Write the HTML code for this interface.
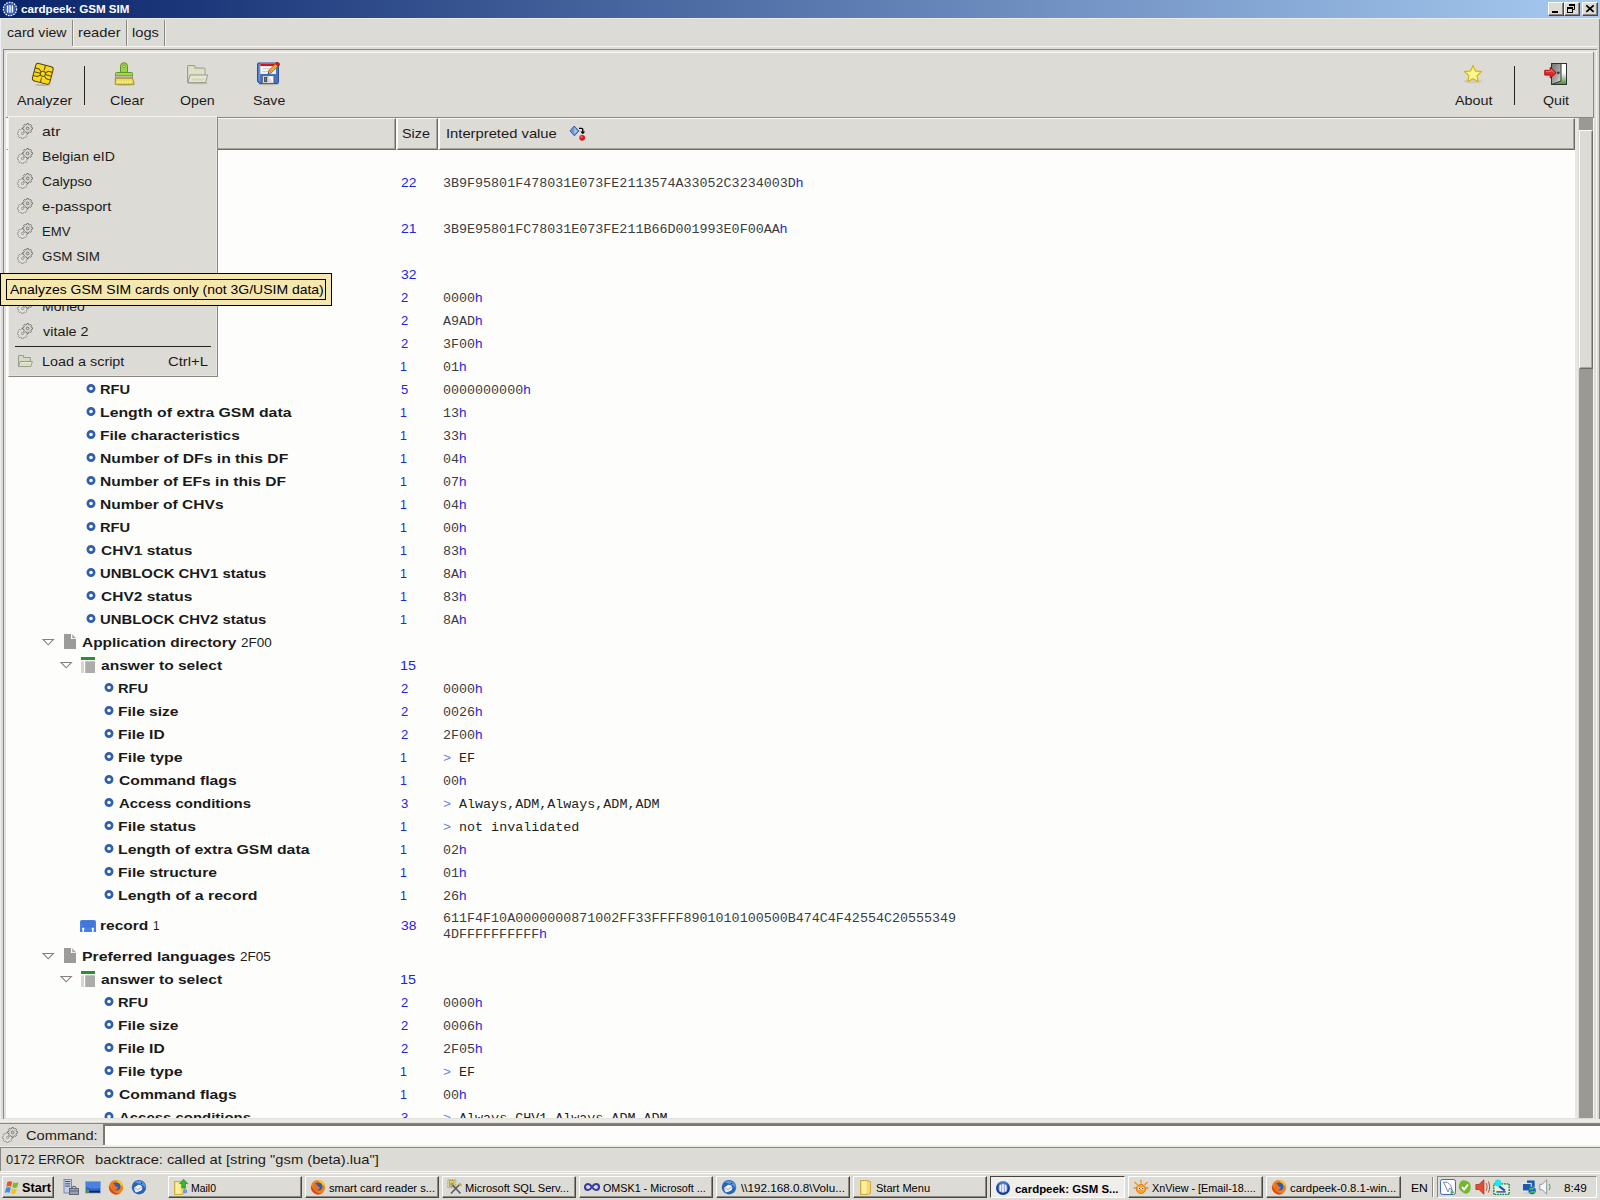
<!DOCTYPE html><html><head><meta charset="utf-8"><title>cardpeek: GSM SIM</title><style>
*{box-sizing:border-box;margin:0;padding:0}
html,body{width:1600px;height:1200px;overflow:hidden;background:#dddbd5}
body{position:relative;font-family:"Liberation Sans",sans-serif;font-size:13.5px;color:#1b1b1b}
.a{position:absolute;white-space:pre}
.a svg,.ic svg{display:block}
.ic{position:absolute}
.tx{position:absolute;white-space:pre;line-height:16px;height:16px;transform-origin:0 0}
.b{font-weight:700;font-size:13px;color:#1a1a1a}
.bl{color:#2323e4}
.gt{color:#6f7fe0}
.mono{font-family:"Liberation Mono",monospace;font-size:13.36px;color:#3c3c3c}
.mono2{font-family:"Liberation Mono",monospace;font-size:13.36px;color:#222}
.tb{font-size:11px;color:#000}
.tbb{font-size:11px;color:#000;font-weight:700}
.btn{position:absolute;border:1px solid;border-color:#fff #4a4844 #4a4844 #fff;box-shadow:inset -1px -1px 0 #8b8881;background:#dddbd5}
.hdr{position:absolute;border:1px solid;border-left-width:2px;border-color:#fbfaf8 #6e6b65 #6e6b65 #fbfaf8;box-shadow:inset -1px -1px 0 #a8a59f;background:#dddbd5}
</style></head><body>
<div class="a" style="left:0px;top:0px;width:1600px;height:18px;background:linear-gradient(90deg,#0a246a,#a6caf0)"></div>
<div class="ic" style="left:2px;top:1px"><svg width="16" height="16" viewBox="0 0 16 16"><circle cx="8" cy="8" r="7.2" fill="#2b4c9c"/><circle cx="8" cy="8" r="6.6" fill="none" stroke="#f0f4ff" stroke-width="1.3" stroke-dasharray="1.6 1.1"/><circle cx="8" cy="8" r="5.2" fill="#3a62b8"/><path d="M5.6 4.6v6.8M8 4.2v7.6M10.4 4.6v6.8" stroke="#fff" stroke-width="1.4"/></svg></div>
<div class="tx tbb" style="left:20.74px;top:0.5px;transform:scaleX(1.0565);color:#fff">cardpeek: GSM SIM</div>
<div class="btn" style="left:1548px;top:2px;width:16px;height:14px;"><svg width="14" height="12" viewBox="0 0 14 12"><rect x="3" y="8" width="6" height="2" fill="#000"/></svg></div>
<div class="btn" style="left:1564px;top:2px;width:16px;height:14px;"><svg width="14" height="12" viewBox="0 0 14 12"><path d="M4.500 3V1.500h5v5H8" fill="none" stroke="#000"/><path d="M4 2h6" stroke="#000" stroke-width="2"/><rect x="2.500" y="4.500" width="5" height="5" fill="none" stroke="#000"/><path d="M2 5h6" stroke="#000" stroke-width="2"/></svg></div>
<div class="btn" style="left:1582px;top:2px;width:16px;height:14px;"><svg width="14" height="12" viewBox="0 0 14 12"><path d="M3.300 2.300l7.400 6.600M10.700 2.300l-7.400 6.600" stroke="#000" stroke-width="1.800"/></svg></div>
<div class="a" style="left:0px;top:18px;width:1600px;height:1px;background:#ecebe7"></div>
<div class="a" style="left:72px;top:20px;width:1px;height:26px;background:#8b8881"></div>
<div class="a" style="left:73px;top:20px;width:1px;height:26px;background:#f1f0ec"></div>
<div class="a" style="left:126px;top:20px;width:1px;height:26px;background:#8b8881"></div>
<div class="a" style="left:127px;top:20px;width:1px;height:26px;background:#f1f0ec"></div>
<div class="a" style="left:164px;top:20px;width:1px;height:26px;background:#8b8881"></div>
<div class="a" style="left:165px;top:20px;width:1px;height:26px;background:#f1f0ec"></div>
<div class="a" style="left:72px;top:46px;width:1526px;height:1px;background:#f4f3f0"></div>
<div class="tx" style="left:6.98px;top:25.0px;transform:scaleX(1.0442);">card view</div>
<div class="tx" style="left:78.18px;top:25.0px;transform:scaleX(1.0921);">reader</div>
<div class="tx" style="left:131.69px;top:25.0px;transform:scaleX(1.0851);">logs</div>
<div class="a" style="left:0px;top:19px;width:1px;height:1103px;background:#efeef0"></div>
<div class="a" style="left:3px;top:49px;width:1594px;height:1px;background:#8b8881"></div>
<div class="a" style="left:3px;top:49px;width:1px;height:1073px;background:#8b8881"></div>
<div class="a" style="left:4px;top:50px;width:1592px;height:2px;background:#e5e3de"></div>
<div class="a" style="left:4px;top:50px;width:2px;height:1070px;background:#e3e1dc"></div>
<div class="a" style="left:6px;top:52px;width:1587px;height:1px;background:#f7f6f4"></div>
<div class="a" style="left:6px;top:52px;width:1px;height:65px;background:#f7f6f4"></div>
<div class="a" style="left:1593px;top:52px;width:1px;height:66px;background:#8b8881"></div>
<div class="a" style="left:1596px;top:50px;width:1px;height:1072px;background:#f7f6f4"></div>
<div class="a" style="left:1599px;top:19px;width:1px;height:1103px;background:#8b8881"></div>
<div class="a" style="left:6px;top:117px;width:1588px;height:1px;background:#8b8881"></div>
<div class="ic" style="left:31px;top:62px"><svg width="24" height="24" viewBox="0 0 24 24"><ellipse cx="12" cy="23" rx="8" ry="1" fill="#b9b6ae"/><g transform="rotate(14.5 11.8 11.8)"><rect x="2.8" y="2.8" width="18" height="18" rx="2.6" fill="#fcd915" stroke="#4f4714" stroke-width="1"/><g fill="none" stroke="#5e4e0c" stroke-width="1.05"><path d="M12.3 2.8v5.2M11.6 20.8v-5"/><circle cx="11.9" cy="11.8" r="2.6"/><path d="M2.8 8h4.2l2.4 2M2.8 11.9h6.4M2.8 15.8h4.4l2.3-2"/><path d="M20.8 8h-4.3l-2.3 2M20.8 11.9h-6.3M20.8 15.8h-4.4l-2.2-2"/></g></g></svg></div>
<div class="tx" style="left:16.50px;top:93.0px;transform:scaleX(1.0526);">Analyzer</div>
<div class="ic" style="left:112px;top:62px"><svg width="24" height="24" viewBox="0 0 24 24"><ellipse cx="13" cy="22.6" rx="10" ry="1.2" fill="#b9b6ae"/><path d="M8.5 11.5V4.2a3.5 3.5 0 0 1 7 0v7.3z" fill="#9fd04a" stroke="#5f9a1e"/><circle cx="12" cy="4.3" r="1.3" fill="#dfe9c8" stroke="#5f9a1e" stroke-width=".8"/><rect x="3.5" y="10.5" width="17" height="3.4" rx="1" fill="#a5d552" stroke="#5f9a1e"/><rect x="3.5" y="13.6" width="17" height="2.6" fill="#b9bbb6" stroke="#8a8c88" stroke-width=".8"/><path d="M3.4 16.2h17.2l1.6 6H3.2z" fill="#ecdc62" stroke="#a58f1c"/><path d="M5.5 19.5v2M8 19v2.5M10.5 19.5v2M13 19v2.5M15.5 19.5v2M18 19v2.5" stroke="#fbf5c0" stroke-width=".9"/></svg></div>
<div class="tx" style="left:110.00px;top:93.0px;transform:scaleX(1.0656);">Clear</div>
<div class="ic" style="left:185px;top:62px"><svg width="24" height="24" viewBox="0 0 24 24"><ellipse cx="12.5" cy="21.2" rx="10.5" ry="1.1" fill="#bdbab2"/><path d="M2.5 20.5V4.2q0-.7.7-.7h6q.7 0 .7.7V6h9.4q.7 0 .7.7V20.5z" fill="#d6dabc" stroke="#9a9c92"/><path d="M4 19.5V5h5v2.5h10.5V12H4z" fill="#e3e6c9" opacity=".6"/><path d="M3 20.5l2-7.5h17.6l-2 7.5z" fill="#e6e9d2" stroke="#9a9c92"/><path d="M6.5 17.5h13" stroke="#d3d8b2" stroke-width="2.2"/></svg></div>
<div class="tx" style="left:180.37px;top:93.0px;transform:scaleX(1.0520);">Open</div>
<div class="ic" style="left:256px;top:62px"><svg width="24" height="24" viewBox="0 0 24 24"><ellipse cx="12.5" cy="22.3" rx="10.5" ry="1" fill="#b9b6ae"/><path d="M1.5 2q0-1 1-1h19q1 0 1 1v18.5q0 1-1 1H3.5l-2-2z" fill="#4672c4" stroke="#2c4f9c"/><path d="M2.5 2.2h1.7v17h-1.7z" fill="#6a92d8"/><rect x="4.3" y="1.5" width="15.6" height="10.4" fill="#fdfdfd"/><rect x="4.3" y="1.5" width="15.6" height="2.6" fill="#d81414"/><path d="M6.5 6.8h9M6.5 9.7h7" stroke="#b9bcc0" stroke-width=".9"/><rect x="6.3" y="13.6" width="11.6" height="7.9" rx=".8" fill="#dcdcda" stroke="#5c5f64"/><path d="M12.5 14.3h4.7v6.5z" fill="#f7f7f5"/><rect x="8.6" y="15.4" width="2.2" height="4.3" fill="#4c7ad0" stroke="#3a3d42" stroke-width=".8"/><g transform="translate(12.2 11.6) rotate(-45)"><path d="M0 0l3-1.7h10.5v3.4H3z" fill="#f2a63a" stroke="#9c5a12" stroke-width=".7"/><path d="M0 0l3-1.7v3.4z" fill="#e8d0a8" stroke="#6a4a20" stroke-width=".5"/><path d="M0 0l1.2-.7v1.4z" fill="#222"/><rect x="12" y="-1.9" width="3" height="3.8" rx=".8" fill="#d41a1a" stroke="#8c1010" stroke-width=".5"/></g></svg></div>
<div class="tx" style="left:252.78px;top:93.0px;transform:scaleX(1.0487);">Save</div>
<div class="ic" style="left:1461px;top:62px"><svg width="24" height="24" viewBox="0 0 24 24"><ellipse cx="12" cy="19.2" rx="9.5" ry="2.2" fill="#cfccc5"/><polygon points="12.00,3.40 14.53,8.92 20.56,9.62 16.09,13.73 17.29,19.68 12.00,16.70 6.71,19.68 7.91,13.73 3.44,9.62 9.47,8.92" fill="#f8ee62" stroke="#d3b416" stroke-width="1.1" stroke-linejoin="round"/><polygon points="12.00,6.20 13.82,9.89 17.90,10.48 14.95,13.36 15.64,17.42 12.00,15.50 8.36,17.42 9.05,13.36 6.10,10.48 10.18,9.89" fill="#fdf8a8" opacity=".75"/></svg></div>
<div class="tx" style="left:1455.00px;top:93.0px;transform:scaleX(1.0638);">About</div>
<div class="ic" style="left:1544px;top:62px"><svg width="24" height="24" viewBox="0 0 24 24"><defs><linearGradient id="qd" x1="0" y1="0" x2="1" y2="1"><stop offset="0" stop-color="#6e706c"/><stop offset=".6" stop-color="#a8aaa6"/><stop offset="1" stop-color="#e8e8e6"/></linearGradient><linearGradient id="qg" x1="0" y1="0" x2="0" y2="1"><stop offset="0" stop-color="#fff"/><stop offset=".45" stop-color="#fdfdfd"/><stop offset="1" stop-color="#4c8c2c"/></linearGradient></defs><rect x="7.5" y="1.5" width="15" height="21" fill="url(#qg)" stroke="#2e3436"/><path d="M7.5 1.5H17v17.5l-9.5 3.5z" fill="url(#qd)" stroke="#2e3436" stroke-linejoin="round"/><circle cx="14.300" cy="10.700" r="1.300" fill="#2e3436"/><path d="M.8 8.3h5.4V5.4l6 5.3-6 5.3v-2.9H.8z" fill="#e22a2a" stroke="#a40000" stroke-width=".9" stroke-linejoin="round"/><path d="M1.8 9.3h5.3V7.7l3.4 3" fill="none" stroke="#f58a8a" stroke-width=".8"/></svg></div>
<div class="tx" style="left:1543.47px;top:93.0px;transform:scaleX(1.0515);">Quit</div>
<div class="a" style="left:84px;top:66px;width:1px;height:39px;background:#26241f"></div>
<div class="a" style="left:1514px;top:66px;width:1px;height:39px;background:#26241f"></div>
<div class="hdr" style="left:6px;top:118px;width:390px;height:32px;"></div>
<div class="hdr" style="left:396px;top:118px;width:42px;height:32px;"></div>
<div class="hdr" style="left:438px;top:118px;width:1137px;height:32px;"></div>
<div class="tx" style="left:402.07px;top:126.0px;transform:scaleX(1.0614);">Size</div>
<div class="tx" style="left:445.83px;top:126.0px;transform:scaleX(1.0935);">Interpreted value</div>
<div class="ic" style="left:569px;top:125px"><svg width="16" height="16" viewBox="0 0 16 16"><path d="M5.2 1l4.6 4.9L5.4 10.8 1 5.9z" fill="#6d97d6" stroke="#2a5096" stroke-width=".9"/><path d="M5.3 2.6l3 3.3-3 3.2z" fill="#a8c6f0"/><path d="M10 3.3h2.6q1.2 0 1.2 1.2V7" fill="none" stroke="#000" stroke-width="1.3"/><path d="M11.4 6.6h4.8l-2.4 2.6z" fill="#000"/><circle cx="13.2" cy="12.8" r="2.9" fill="#d81c1c"/><circle cx="12.5" cy="12" r="1" fill="#f07878"/></svg></div>
<div class="a" style="left:6px;top:150px;width:1569px;height:968px;background:#fdfefc"></div>
<div class="a" style="left:1575px;top:118px;width:3px;height:1002px;background:#e9e7e3"></div>
<div class="a" style="left:4px;top:1118px;width:1574px;height:2px;background:#e3e1dc"></div>
<div class="a" style="left:1579px;top:118px;width:14px;height:1000px;background:#9b9993"></div>
<div class="a" style="left:1579px;top:130px;width:14px;height:239px;border:1px solid;border-color:#fbfaf8 #6e6b65 #6e6b65 #fbfaf8;box-shadow:inset -1px -1px 0 #a8a59f;background:#dddbd5"></div>
<div class="a" style="left:1593px;top:118px;width:1px;height:1002px;background:#f4f3f0"></div>
<div class="tx bl" style="left:400.59px;top:175.0px;transform:scaleX(1.0286);">22</div>
<div class="tx" style="left:443px;top:175px"><span class="mono">3B9F95801F478031E073FE2113574A33052C3234003D</span><span class="bl">h</span></div>
<div class="tx bl" style="left:400.59px;top:221.0px;transform:scaleX(1.0286);">21</div>
<div class="tx" style="left:443px;top:221px"><span class="mono">3B9E95801FC78031E073FE211B66D001993E0F00AA</span><span class="bl">h</span></div>
<div class="tx bl" style="left:400.59px;top:267.0px;transform:scaleX(1.0286);">32</div>
<div class="tx bl" style="left:400.52px;top:290.0px;transform:scaleX(0.9692);">2</div>
<div class="tx" style="left:443px;top:290px"><span class="mono">0000</span><span class="bl">h</span></div>
<div class="tx bl" style="left:400.52px;top:313.0px;transform:scaleX(0.9692);">2</div>
<div class="tx" style="left:443px;top:313px"><span class="mono">A9AD</span><span class="bl">h</span></div>
<div class="tx bl" style="left:400.52px;top:336.0px;transform:scaleX(0.9692);">2</div>
<div class="tx" style="left:443px;top:336px"><span class="mono">3F00</span><span class="bl">h</span></div>
<div class="tx bl" style="left:400.48px;top:359.0px;transform:scaleX(0.9167);">1</div>
<div class="tx" style="left:443px;top:359px"><span class="mono">01</span><span class="bl">h</span></div>
<div class="ic" style="left:85.6px;top:383px"><svg width="10" height="12" viewBox="0 0 10 12"><circle cx="5" cy="5.5" r="3.15" fill="#fff" stroke="#3060ad" stroke-width="2.7"/></svg></div>
<div class="tx b" style="left:100.25px;top:382.0px;transform:scaleX(1.1287);">RFU</div>
<div class="tx bl" style="left:400.52px;top:382.0px;transform:scaleX(0.9692);">5</div>
<div class="tx" style="left:443px;top:382px"><span class="mono">0000000000</span><span class="bl">h</span></div>
<div class="ic" style="left:85.6px;top:406px"><svg width="10" height="12" viewBox="0 0 10 12"><circle cx="5" cy="5.5" r="3.15" fill="#fff" stroke="#3060ad" stroke-width="2.7"/></svg></div>
<div class="tx b" style="left:100.19px;top:405.0px;transform:scaleX(1.2159);">Length of extra GSM data</div>
<div class="tx bl" style="left:400.48px;top:405.0px;transform:scaleX(0.9167);">1</div>
<div class="tx" style="left:443px;top:405px"><span class="mono">13</span><span class="bl">h</span></div>
<div class="ic" style="left:85.6px;top:429px"><svg width="10" height="12" viewBox="0 0 10 12"><circle cx="5" cy="5.5" r="3.15" fill="#fff" stroke="#3060ad" stroke-width="2.7"/></svg></div>
<div class="tx b" style="left:100.21px;top:428.0px;transform:scaleX(1.1863);">File characteristics</div>
<div class="tx bl" style="left:400.48px;top:428.0px;transform:scaleX(0.9167);">1</div>
<div class="tx" style="left:443px;top:428px"><span class="mono">33</span><span class="bl">h</span></div>
<div class="ic" style="left:85.6px;top:452px"><svg width="10" height="12" viewBox="0 0 10 12"><circle cx="5" cy="5.5" r="3.15" fill="#fff" stroke="#3060ad" stroke-width="2.7"/></svg></div>
<div class="tx b" style="left:100.20px;top:451.0px;transform:scaleX(1.2065);">Number of DFs in this DF</div>
<div class="tx bl" style="left:400.48px;top:451.0px;transform:scaleX(0.9167);">1</div>
<div class="tx" style="left:443px;top:451px"><span class="mono">04</span><span class="bl">h</span></div>
<div class="ic" style="left:85.6px;top:475px"><svg width="10" height="12" viewBox="0 0 10 12"><circle cx="5" cy="5.5" r="3.15" fill="#fff" stroke="#3060ad" stroke-width="2.7"/></svg></div>
<div class="tx b" style="left:100.20px;top:474.0px;transform:scaleX(1.1981);">Number of EFs in this DF</div>
<div class="tx bl" style="left:400.48px;top:474.0px;transform:scaleX(0.9167);">1</div>
<div class="tx" style="left:443px;top:474px"><span class="mono">07</span><span class="bl">h</span></div>
<div class="ic" style="left:85.6px;top:498px"><svg width="10" height="12" viewBox="0 0 10 12"><circle cx="5" cy="5.5" r="3.15" fill="#fff" stroke="#3060ad" stroke-width="2.7"/></svg></div>
<div class="tx b" style="left:100.20px;top:497.0px;transform:scaleX(1.1961);">Number of CHVs</div>
<div class="tx bl" style="left:400.48px;top:497.0px;transform:scaleX(0.9167);">1</div>
<div class="tx" style="left:443px;top:497px"><span class="mono">04</span><span class="bl">h</span></div>
<div class="ic" style="left:85.6px;top:521px"><svg width="10" height="12" viewBox="0 0 10 12"><circle cx="5" cy="5.5" r="3.15" fill="#fff" stroke="#3060ad" stroke-width="2.7"/></svg></div>
<div class="tx b" style="left:100.25px;top:520.0px;transform:scaleX(1.1287);">RFU</div>
<div class="tx bl" style="left:400.48px;top:520.0px;transform:scaleX(0.9167);">1</div>
<div class="tx" style="left:443px;top:520px"><span class="mono">00</span><span class="bl">h</span></div>
<div class="ic" style="left:85.6px;top:544px"><svg width="10" height="12" viewBox="0 0 10 12"><circle cx="5" cy="5.5" r="3.15" fill="#fff" stroke="#3060ad" stroke-width="2.7"/></svg></div>
<div class="tx b" style="left:100.50px;top:543.0px;transform:scaleX(1.1921);">CHV1 status</div>
<div class="tx bl" style="left:400.48px;top:543.0px;transform:scaleX(0.9167);">1</div>
<div class="tx" style="left:443px;top:543px"><span class="mono">83</span><span class="bl">h</span></div>
<div class="ic" style="left:85.6px;top:567px"><svg width="10" height="12" viewBox="0 0 10 12"><circle cx="5" cy="5.5" r="3.15" fill="#fff" stroke="#3060ad" stroke-width="2.7"/></svg></div>
<div class="tx b" style="left:100.24px;top:566.0px;transform:scaleX(1.1458);">UNBLOCK CHV1 status</div>
<div class="tx bl" style="left:400.48px;top:566.0px;transform:scaleX(0.9167);">1</div>
<div class="tx" style="left:443px;top:566px"><span class="mono">8A</span><span class="bl">h</span></div>
<div class="ic" style="left:85.6px;top:590px"><svg width="10" height="12" viewBox="0 0 10 12"><circle cx="5" cy="5.5" r="3.15" fill="#fff" stroke="#3060ad" stroke-width="2.7"/></svg></div>
<div class="tx b" style="left:100.50px;top:589.0px;transform:scaleX(1.1921);">CHV2 status</div>
<div class="tx bl" style="left:400.48px;top:589.0px;transform:scaleX(0.9167);">1</div>
<div class="tx" style="left:443px;top:589px"><span class="mono">83</span><span class="bl">h</span></div>
<div class="ic" style="left:85.6px;top:613px"><svg width="10" height="12" viewBox="0 0 10 12"><circle cx="5" cy="5.5" r="3.15" fill="#fff" stroke="#3060ad" stroke-width="2.7"/></svg></div>
<div class="tx b" style="left:100.24px;top:612.0px;transform:scaleX(1.1458);">UNBLOCK CHV2 status</div>
<div class="tx bl" style="left:400.48px;top:612.0px;transform:scaleX(0.9167);">1</div>
<div class="tx" style="left:443px;top:612px"><span class="mono">8A</span><span class="bl">h</span></div>
<div class="ic" style="left:41.3px;top:638px"><svg width="14" height="10" viewBox="0 0 14 10"><path d="M2 1.5h10.400l-5.200 5.300z" fill="#fff" stroke="#8a8279" stroke-width="1.1"/></svg></div>
<div class="ic" style="left:63px;top:634px"><svg width="14" height="16" viewBox="0 0 14 16"><path d="M1 0h8l4 4V15H1z" fill="#9d9b97"/><path d="M8 0h1l4 4v1H8z" fill="#fdfefc"/><path d="M9.200 .6L12.800 4.200H9.200z" fill="#a9a7a3"/></svg></div>
<div class="tx b" style="left:82.20px;top:635.0px;transform:scaleX(1.1869);">Application directory</div>
<div class="tx" style="left:240.60px;top:635.0px;transform:scaleX(0.9983);">2F00</div>
<div class="ic" style="left:59.400000000000006px;top:661px"><svg width="14" height="10" viewBox="0 0 14 10"><path d="M2 1.5h10.400l-5.200 5.300z" fill="#fff" stroke="#8a8279" stroke-width="1.1"/></svg></div>
<div class="ic" style="left:81px;top:657px"><svg width="14" height="16" viewBox="0 0 14 16"><rect x="0" y="0" width="14" height="3" fill="#289030"/><rect x="0" y="4.3" width="3" height="11.7" fill="#d6d6d2"/><rect x="4.2" y="4.3" width="9.8" height="11.7" fill="#adacaa"/></svg></div>
<div class="tx b" style="left:100.80px;top:658.0px;transform:scaleX(1.1970);">answer to select</div>
<div class="tx bl" style="left:400.03px;top:658.0px;transform:scaleX(1.0667);">15</div>
<div class="ic" style="left:103.6px;top:682px"><svg width="10" height="12" viewBox="0 0 10 12"><circle cx="5" cy="5.5" r="3.15" fill="#fff" stroke="#3060ad" stroke-width="2.7"/></svg></div>
<div class="tx b" style="left:118.25px;top:681.0px;transform:scaleX(1.1287);">RFU</div>
<div class="tx bl" style="left:400.52px;top:681.0px;transform:scaleX(0.9692);">2</div>
<div class="tx" style="left:443px;top:681px"><span class="mono">0000</span><span class="bl">h</span></div>
<div class="ic" style="left:103.6px;top:705px"><svg width="10" height="12" viewBox="0 0 10 12"><circle cx="5" cy="5.5" r="3.15" fill="#fff" stroke="#3060ad" stroke-width="2.7"/></svg></div>
<div class="tx b" style="left:118.20px;top:704.0px;transform:scaleX(1.1960);">File size</div>
<div class="tx bl" style="left:400.52px;top:704.0px;transform:scaleX(0.9692);">2</div>
<div class="tx" style="left:443px;top:704px"><span class="mono">0026</span><span class="bl">h</span></div>
<div class="ic" style="left:103.6px;top:728px"><svg width="10" height="12" viewBox="0 0 10 12"><circle cx="5" cy="5.5" r="3.15" fill="#fff" stroke="#3060ad" stroke-width="2.7"/></svg></div>
<div class="tx b" style="left:118.20px;top:727.0px;transform:scaleX(1.1947);">File ID</div>
<div class="tx bl" style="left:400.52px;top:727.0px;transform:scaleX(0.9692);">2</div>
<div class="tx" style="left:443px;top:727px"><span class="mono">2F00</span><span class="bl">h</span></div>
<div class="ic" style="left:103.6px;top:751px"><svg width="10" height="12" viewBox="0 0 10 12"><circle cx="5" cy="5.5" r="3.15" fill="#fff" stroke="#3060ad" stroke-width="2.7"/></svg></div>
<div class="tx b" style="left:118.18px;top:750.0px;transform:scaleX(1.2272);">File type</div>
<div class="tx bl" style="left:400.48px;top:750.0px;transform:scaleX(0.9167);">1</div>
<div class="tx" style="left:443px;top:750px"><span class="mono2"><span class="gt">&gt;</span> EF</span></div>
<div class="ic" style="left:103.6px;top:774px"><svg width="10" height="12" viewBox="0 0 10 12"><circle cx="5" cy="5.5" r="3.15" fill="#fff" stroke="#3060ad" stroke-width="2.7"/></svg></div>
<div class="tx b" style="left:118.50px;top:773.0px;transform:scaleX(1.2062);">Command flags</div>
<div class="tx bl" style="left:400.48px;top:773.0px;transform:scaleX(0.9167);">1</div>
<div class="tx" style="left:443px;top:773px"><span class="mono">00</span><span class="bl">h</span></div>
<div class="ic" style="left:103.6px;top:797px"><svg width="10" height="12" viewBox="0 0 10 12"><circle cx="5" cy="5.5" r="3.15" fill="#fff" stroke="#3060ad" stroke-width="2.7"/></svg></div>
<div class="tx b" style="left:118.81px;top:796.0px;transform:scaleX(1.1491);">Access conditions</div>
<div class="tx bl" style="left:400.52px;top:796.0px;transform:scaleX(0.9692);">3</div>
<div class="tx" style="left:443px;top:796px"><span class="mono2"><span class="gt">&gt;</span> Always,ADM,Always,ADM,ADM</span></div>
<div class="ic" style="left:103.6px;top:820px"><svg width="10" height="12" viewBox="0 0 10 12"><circle cx="5" cy="5.5" r="3.15" fill="#fff" stroke="#3060ad" stroke-width="2.7"/></svg></div>
<div class="tx b" style="left:118.19px;top:819.0px;transform:scaleX(1.2127);">File status</div>
<div class="tx bl" style="left:400.48px;top:819.0px;transform:scaleX(0.9167);">1</div>
<div class="tx" style="left:443px;top:819px"><span class="mono2"><span class="gt">&gt;</span> not invalidated</span></div>
<div class="ic" style="left:103.6px;top:843px"><svg width="10" height="12" viewBox="0 0 10 12"><circle cx="5" cy="5.5" r="3.15" fill="#fff" stroke="#3060ad" stroke-width="2.7"/></svg></div>
<div class="tx b" style="left:118.19px;top:842.0px;transform:scaleX(1.2159);">Length of extra GSM data</div>
<div class="tx bl" style="left:400.48px;top:842.0px;transform:scaleX(0.9167);">1</div>
<div class="tx" style="left:443px;top:842px"><span class="mono">02</span><span class="bl">h</span></div>
<div class="ic" style="left:103.6px;top:866px"><svg width="10" height="12" viewBox="0 0 10 12"><circle cx="5" cy="5.5" r="3.15" fill="#fff" stroke="#3060ad" stroke-width="2.7"/></svg></div>
<div class="tx b" style="left:118.20px;top:865.0px;transform:scaleX(1.2012);">File structure</div>
<div class="tx bl" style="left:400.48px;top:865.0px;transform:scaleX(0.9167);">1</div>
<div class="tx" style="left:443px;top:865px"><span class="mono">01</span><span class="bl">h</span></div>
<div class="ic" style="left:103.6px;top:889px"><svg width="10" height="12" viewBox="0 0 10 12"><circle cx="5" cy="5.5" r="3.15" fill="#fff" stroke="#3060ad" stroke-width="2.7"/></svg></div>
<div class="tx b" style="left:118.18px;top:888.0px;transform:scaleX(1.2231);">Length of a record</div>
<div class="tx bl" style="left:400.48px;top:888.0px;transform:scaleX(0.9167);">1</div>
<div class="tx" style="left:443px;top:888px"><span class="mono">26</span><span class="bl">h</span></div>
<div class="ic" style="left:80px;top:917px"><svg width="16" height="16" viewBox="0 0 16 16"><path d="M0 4.8q0-1.8 1.8-1.8h12.4q1.8 0 1.8 1.8V15H13.6v-2.2a1.2 1.2 0 1 0-1.5 0V15H4v-2.2a1.2 1.2 0 1 0-1.5 0V15H0z" fill="#4a80e2"/><path d="M1.8 5.2h12.4M1.8 7.4h12.4M1.8 9.6h12.4" stroke="#3568c8" stroke-width=".8"/></svg></div>
<div class="tx b" style="left:100.20px;top:918.0px;transform:scaleX(1.1949);">record</div>
<div class="tx" style="left:153.23px;top:918.0px;transform:scaleX(0.8667);">1</div>
<div class="tx bl" style="left:400.59px;top:918.0px;transform:scaleX(1.0286);">38</div>
<div class="tx" style="left:443px;top:910px;height:32px;line-height:15px"><span class="mono">611F4F10A0000000871002FF33FFFF8901010100500B474C4F42554C20555349
4DFFFFFFFFFF</span><span class="bl">h</span></div>
<div class="ic" style="left:41.3px;top:952px"><svg width="14" height="10" viewBox="0 0 14 10"><path d="M2 1.5h10.400l-5.200 5.300z" fill="#fff" stroke="#8a8279" stroke-width="1.1"/></svg></div>
<div class="ic" style="left:63px;top:948px"><svg width="14" height="16" viewBox="0 0 14 16"><path d="M1 0h8l4 4V15H1z" fill="#9d9b97"/><path d="M8 0h1l4 4v1H8z" fill="#fdfefc"/><path d="M9.200 .6L12.800 4.200H9.200z" fill="#a9a7a3"/></svg></div>
<div class="tx b" style="left:81.59px;top:949.0px;transform:scaleX(1.2193);">Preferred languages</div>
<div class="tx" style="left:239.70px;top:949.0px;transform:scaleX(0.9983);">2F05</div>
<div class="ic" style="left:59.400000000000006px;top:975px"><svg width="14" height="10" viewBox="0 0 14 10"><path d="M2 1.5h10.400l-5.200 5.300z" fill="#fff" stroke="#8a8279" stroke-width="1.1"/></svg></div>
<div class="ic" style="left:81px;top:971px"><svg width="14" height="16" viewBox="0 0 14 16"><rect x="0" y="0" width="14" height="3" fill="#289030"/><rect x="0" y="4.3" width="3" height="11.7" fill="#d6d6d2"/><rect x="4.2" y="4.3" width="9.8" height="11.7" fill="#adacaa"/></svg></div>
<div class="tx b" style="left:100.80px;top:972.0px;transform:scaleX(1.1970);">answer to select</div>
<div class="tx bl" style="left:400.03px;top:972.0px;transform:scaleX(1.0667);">15</div>
<div class="ic" style="left:103.6px;top:996px"><svg width="10" height="12" viewBox="0 0 10 12"><circle cx="5" cy="5.5" r="3.15" fill="#fff" stroke="#3060ad" stroke-width="2.7"/></svg></div>
<div class="tx b" style="left:118.25px;top:995.0px;transform:scaleX(1.1287);">RFU</div>
<div class="tx bl" style="left:400.52px;top:995.0px;transform:scaleX(0.9692);">2</div>
<div class="tx" style="left:443px;top:995px"><span class="mono">0000</span><span class="bl">h</span></div>
<div class="ic" style="left:103.6px;top:1019px"><svg width="10" height="12" viewBox="0 0 10 12"><circle cx="5" cy="5.5" r="3.15" fill="#fff" stroke="#3060ad" stroke-width="2.7"/></svg></div>
<div class="tx b" style="left:118.20px;top:1018.0px;transform:scaleX(1.1960);">File size</div>
<div class="tx bl" style="left:400.52px;top:1018.0px;transform:scaleX(0.9692);">2</div>
<div class="tx" style="left:443px;top:1018px"><span class="mono">0006</span><span class="bl">h</span></div>
<div class="ic" style="left:103.6px;top:1042px"><svg width="10" height="12" viewBox="0 0 10 12"><circle cx="5" cy="5.5" r="3.15" fill="#fff" stroke="#3060ad" stroke-width="2.7"/></svg></div>
<div class="tx b" style="left:118.20px;top:1041.0px;transform:scaleX(1.1947);">File ID</div>
<div class="tx bl" style="left:400.52px;top:1041.0px;transform:scaleX(0.9692);">2</div>
<div class="tx" style="left:443px;top:1041px"><span class="mono">2F05</span><span class="bl">h</span></div>
<div class="ic" style="left:103.6px;top:1065px"><svg width="10" height="12" viewBox="0 0 10 12"><circle cx="5" cy="5.5" r="3.15" fill="#fff" stroke="#3060ad" stroke-width="2.7"/></svg></div>
<div class="tx b" style="left:118.18px;top:1064.0px;transform:scaleX(1.2272);">File type</div>
<div class="tx bl" style="left:400.48px;top:1064.0px;transform:scaleX(0.9167);">1</div>
<div class="tx" style="left:443px;top:1064px"><span class="mono2"><span class="gt">&gt;</span> EF</span></div>
<div class="ic" style="left:103.6px;top:1088px"><svg width="10" height="12" viewBox="0 0 10 12"><circle cx="5" cy="5.5" r="3.15" fill="#fff" stroke="#3060ad" stroke-width="2.7"/></svg></div>
<div class="tx b" style="left:118.50px;top:1087.0px;transform:scaleX(1.2062);">Command flags</div>
<div class="tx bl" style="left:400.48px;top:1087.0px;transform:scaleX(0.9167);">1</div>
<div class="tx" style="left:443px;top:1087px"><span class="mono">00</span><span class="bl">h</span></div>
<div class="a" style="left:5px;top:1105px;width:1570px;height:13px;overflow:hidden"><div style="position:absolute;left:-5px;top:-1105px">
<div class="ic" style="left:103.6px;top:1111px"><svg width="10" height="12" viewBox="0 0 10 12"><circle cx="5" cy="5.5" r="3.15" fill="#fff" stroke="#3060ad" stroke-width="2.7"/></svg></div>
<div class="tx b" style="left:118.81px;top:1110.0px;transform:scaleX(1.1491);">Access conditions</div>
<div class="tx bl" style="left:400.52px;top:1110.0px;transform:scaleX(0.9692);">3</div>
<div class="tx" style="left:443px;top:1110px"><span class="mono2"><span class="gt">&gt;</span> Always,CHV1,Always,ADM,ADM</span></div>
</div></div>
<div class="a" style="left:8px;top:116px;width:210px;height:261px;background:#dddbd5;border:1px solid;border-color:#f3f2ef #8b8881 #8b8881 #f3f2ef;box-shadow:inset -1px -1px 0 #e6e4df"></div>
<div class="ic" style="left:17px;top:123px"><svg width="16" height="16" viewBox="0 0 16 16"><polygon points="9.58,9.52 10.65,9.81 10.65,11.19 9.58,11.48 9.08,12.69 9.63,13.65 8.65,14.63 7.69,14.08 6.48,14.58 6.19,15.65 4.81,15.65 4.52,14.58 3.31,14.08 2.35,14.63 1.37,13.65 1.92,12.69 1.42,11.48 0.35,11.19 0.35,9.81 1.42,9.52 1.92,8.31 1.37,7.35 2.35,6.37 3.31,6.92 4.52,6.42 4.81,5.35 6.19,5.35 6.48,6.42 7.69,6.92 8.65,6.37 9.63,7.35 9.08,8.31" fill="#e2e2de" stroke="#8c8c88" stroke-width=".85" stroke-linejoin="round"/><circle cx="5.5" cy="10.5" r="1.25" fill="#dddbd5" stroke="#8c8c88" stroke-width=".85"/><polygon points="14.49,4.47 15.56,4.73 15.56,6.07 14.49,6.33 14.01,7.49 14.57,8.43 13.63,9.37 12.69,8.81 11.53,9.29 11.27,10.36 9.93,10.36 9.67,9.29 8.51,8.81 7.57,9.37 6.63,8.43 7.19,7.49 6.71,6.33 5.64,6.07 5.64,4.73 6.71,4.47 7.19,3.31 6.63,2.37 7.57,1.43 8.51,1.99 9.67,1.51 9.93,0.44 11.27,0.44 11.53,1.51 12.69,1.99 13.63,1.43 14.57,2.37 14.01,3.31" fill="#d8d8d4" stroke="#636361" stroke-width=".85" stroke-linejoin="round"/><circle cx="10.6" cy="5.4" r="1.35" fill="#dddbd5" stroke="#636361" stroke-width=".85"/></svg></div>
<div class="tx" style="left:42.42px;top:124.0px;transform:scaleX(1.1667);">atr</div>
<div class="ic" style="left:17px;top:148px"><svg width="16" height="16" viewBox="0 0 16 16"><polygon points="9.58,9.52 10.65,9.81 10.65,11.19 9.58,11.48 9.08,12.69 9.63,13.65 8.65,14.63 7.69,14.08 6.48,14.58 6.19,15.65 4.81,15.65 4.52,14.58 3.31,14.08 2.35,14.63 1.37,13.65 1.92,12.69 1.42,11.48 0.35,11.19 0.35,9.81 1.42,9.52 1.92,8.31 1.37,7.35 2.35,6.37 3.31,6.92 4.52,6.42 4.81,5.35 6.19,5.35 6.48,6.42 7.69,6.92 8.65,6.37 9.63,7.35 9.08,8.31" fill="#e2e2de" stroke="#8c8c88" stroke-width=".85" stroke-linejoin="round"/><circle cx="5.5" cy="10.5" r="1.25" fill="#dddbd5" stroke="#8c8c88" stroke-width=".85"/><polygon points="14.49,4.47 15.56,4.73 15.56,6.07 14.49,6.33 14.01,7.49 14.57,8.43 13.63,9.37 12.69,8.81 11.53,9.29 11.27,10.36 9.93,10.36 9.67,9.29 8.51,8.81 7.57,9.37 6.63,8.43 7.19,7.49 6.71,6.33 5.64,6.07 5.64,4.73 6.71,4.47 7.19,3.31 6.63,2.37 7.57,1.43 8.51,1.99 9.67,1.51 9.93,0.44 11.27,0.44 11.53,1.51 12.69,1.99 13.63,1.43 14.57,2.37 14.01,3.31" fill="#d8d8d4" stroke="#636361" stroke-width=".85" stroke-linejoin="round"/><circle cx="10.6" cy="5.4" r="1.35" fill="#dddbd5" stroke="#636361" stroke-width=".85"/></svg></div>
<div class="tx" style="left:41.96px;top:149.0px;transform:scaleX(1.0440);">Belgian eID</div>
<div class="ic" style="left:17px;top:173px"><svg width="16" height="16" viewBox="0 0 16 16"><polygon points="9.58,9.52 10.65,9.81 10.65,11.19 9.58,11.48 9.08,12.69 9.63,13.65 8.65,14.63 7.69,14.08 6.48,14.58 6.19,15.65 4.81,15.65 4.52,14.58 3.31,14.08 2.35,14.63 1.37,13.65 1.92,12.69 1.42,11.48 0.35,11.19 0.35,9.81 1.42,9.52 1.92,8.31 1.37,7.35 2.35,6.37 3.31,6.92 4.52,6.42 4.81,5.35 6.19,5.35 6.48,6.42 7.69,6.92 8.65,6.37 9.63,7.35 9.08,8.31" fill="#e2e2de" stroke="#8c8c88" stroke-width=".85" stroke-linejoin="round"/><circle cx="5.5" cy="10.5" r="1.25" fill="#dddbd5" stroke="#8c8c88" stroke-width=".85"/><polygon points="14.49,4.47 15.56,4.73 15.56,6.07 14.49,6.33 14.01,7.49 14.57,8.43 13.63,9.37 12.69,8.81 11.53,9.29 11.27,10.36 9.93,10.36 9.67,9.29 8.51,8.81 7.57,9.37 6.63,8.43 7.19,7.49 6.71,6.33 5.64,6.07 5.64,4.73 6.71,4.47 7.19,3.31 6.63,2.37 7.57,1.43 8.51,1.99 9.67,1.51 9.93,0.44 11.27,0.44 11.53,1.51 12.69,1.99 13.63,1.43 14.57,2.37 14.01,3.31" fill="#d8d8d4" stroke="#636361" stroke-width=".85" stroke-linejoin="round"/><circle cx="10.6" cy="5.4" r="1.35" fill="#dddbd5" stroke="#636361" stroke-width=".85"/></svg></div>
<div class="tx" style="left:42.23px;top:174.0px;transform:scaleX(1.0263);">Calypso</div>
<div class="ic" style="left:17px;top:198px"><svg width="16" height="16" viewBox="0 0 16 16"><polygon points="9.58,9.52 10.65,9.81 10.65,11.19 9.58,11.48 9.08,12.69 9.63,13.65 8.65,14.63 7.69,14.08 6.48,14.58 6.19,15.65 4.81,15.65 4.52,14.58 3.31,14.08 2.35,14.63 1.37,13.65 1.92,12.69 1.42,11.48 0.35,11.19 0.35,9.81 1.42,9.52 1.92,8.31 1.37,7.35 2.35,6.37 3.31,6.92 4.52,6.42 4.81,5.35 6.19,5.35 6.48,6.42 7.69,6.92 8.65,6.37 9.63,7.35 9.08,8.31" fill="#e2e2de" stroke="#8c8c88" stroke-width=".85" stroke-linejoin="round"/><circle cx="5.5" cy="10.5" r="1.25" fill="#dddbd5" stroke="#8c8c88" stroke-width=".85"/><polygon points="14.49,4.47 15.56,4.73 15.56,6.07 14.49,6.33 14.01,7.49 14.57,8.43 13.63,9.37 12.69,8.81 11.53,9.29 11.27,10.36 9.93,10.36 9.67,9.29 8.51,8.81 7.57,9.37 6.63,8.43 7.19,7.49 6.71,6.33 5.64,6.07 5.64,4.73 6.71,4.47 7.19,3.31 6.63,2.37 7.57,1.43 8.51,1.99 9.67,1.51 9.93,0.44 11.27,0.44 11.53,1.51 12.69,1.99 13.63,1.43 14.57,2.37 14.01,3.31" fill="#d8d8d4" stroke="#636361" stroke-width=".85" stroke-linejoin="round"/><circle cx="10.6" cy="5.4" r="1.35" fill="#dddbd5" stroke="#636361" stroke-width=".85"/></svg></div>
<div class="tx" style="left:42.46px;top:199.0px;transform:scaleX(1.0870);">e-passport</div>
<div class="ic" style="left:17px;top:223px"><svg width="16" height="16" viewBox="0 0 16 16"><polygon points="9.58,9.52 10.65,9.81 10.65,11.19 9.58,11.48 9.08,12.69 9.63,13.65 8.65,14.63 7.69,14.08 6.48,14.58 6.19,15.65 4.81,15.65 4.52,14.58 3.31,14.08 2.35,14.63 1.37,13.65 1.92,12.69 1.42,11.48 0.35,11.19 0.35,9.81 1.42,9.52 1.92,8.31 1.37,7.35 2.35,6.37 3.31,6.92 4.52,6.42 4.81,5.35 6.19,5.35 6.48,6.42 7.69,6.92 8.65,6.37 9.63,7.35 9.08,8.31" fill="#e2e2de" stroke="#8c8c88" stroke-width=".85" stroke-linejoin="round"/><circle cx="5.5" cy="10.5" r="1.25" fill="#dddbd5" stroke="#8c8c88" stroke-width=".85"/><polygon points="14.49,4.47 15.56,4.73 15.56,6.07 14.49,6.33 14.01,7.49 14.57,8.43 13.63,9.37 12.69,8.81 11.53,9.29 11.27,10.36 9.93,10.36 9.67,9.29 8.51,8.81 7.57,9.37 6.63,8.43 7.19,7.49 6.71,6.33 5.64,6.07 5.64,4.73 6.71,4.47 7.19,3.31 6.63,2.37 7.57,1.43 8.51,1.99 9.67,1.51 9.93,0.44 11.27,0.44 11.53,1.51 12.69,1.99 13.63,1.43 14.57,2.37 14.01,3.31" fill="#d8d8d4" stroke="#636361" stroke-width=".85" stroke-linejoin="round"/><circle cx="10.6" cy="5.4" r="1.35" fill="#dddbd5" stroke="#636361" stroke-width=".85"/></svg></div>
<div class="tx" style="left:42.03px;top:224.0px;transform:scaleX(0.9735);">EMV</div>
<div class="ic" style="left:17px;top:248px"><svg width="16" height="16" viewBox="0 0 16 16"><polygon points="9.58,9.52 10.65,9.81 10.65,11.19 9.58,11.48 9.08,12.69 9.63,13.65 8.65,14.63 7.69,14.08 6.48,14.58 6.19,15.65 4.81,15.65 4.52,14.58 3.31,14.08 2.35,14.63 1.37,13.65 1.92,12.69 1.42,11.48 0.35,11.19 0.35,9.81 1.42,9.52 1.92,8.31 1.37,7.35 2.35,6.37 3.31,6.92 4.52,6.42 4.81,5.35 6.19,5.35 6.48,6.42 7.69,6.92 8.65,6.37 9.63,7.35 9.08,8.31" fill="#e2e2de" stroke="#8c8c88" stroke-width=".85" stroke-linejoin="round"/><circle cx="5.5" cy="10.5" r="1.25" fill="#dddbd5" stroke="#8c8c88" stroke-width=".85"/><polygon points="14.49,4.47 15.56,4.73 15.56,6.07 14.49,6.33 14.01,7.49 14.57,8.43 13.63,9.37 12.69,8.81 11.53,9.29 11.27,10.36 9.93,10.36 9.67,9.29 8.51,8.81 7.57,9.37 6.63,8.43 7.19,7.49 6.71,6.33 5.64,6.07 5.64,4.73 6.71,4.47 7.19,3.31 6.63,2.37 7.57,1.43 8.51,1.99 9.67,1.51 9.93,0.44 11.27,0.44 11.53,1.51 12.69,1.99 13.63,1.43 14.57,2.37 14.01,3.31" fill="#d8d8d4" stroke="#636361" stroke-width=".85" stroke-linejoin="round"/><circle cx="10.6" cy="5.4" r="1.35" fill="#dddbd5" stroke="#636361" stroke-width=".85"/></svg></div>
<div class="tx" style="left:42.26px;top:249.0px;transform:scaleX(0.9912);">GSM SIM</div>
<div class="ic" style="left:17px;top:273px"><svg width="16" height="16" viewBox="0 0 16 16"><polygon points="9.58,9.52 10.65,9.81 10.65,11.19 9.58,11.48 9.08,12.69 9.63,13.65 8.65,14.63 7.69,14.08 6.48,14.58 6.19,15.65 4.81,15.65 4.52,14.58 3.31,14.08 2.35,14.63 1.37,13.65 1.92,12.69 1.42,11.48 0.35,11.19 0.35,9.81 1.42,9.52 1.92,8.31 1.37,7.35 2.35,6.37 3.31,6.92 4.52,6.42 4.81,5.35 6.19,5.35 6.48,6.42 7.69,6.92 8.65,6.37 9.63,7.35 9.08,8.31" fill="#e2e2de" stroke="#8c8c88" stroke-width=".85" stroke-linejoin="round"/><circle cx="5.5" cy="10.5" r="1.25" fill="#dddbd5" stroke="#8c8c88" stroke-width=".85"/><polygon points="14.49,4.47 15.56,4.73 15.56,6.07 14.49,6.33 14.01,7.49 14.57,8.43 13.63,9.37 12.69,8.81 11.53,9.29 11.27,10.36 9.93,10.36 9.67,9.29 8.51,8.81 7.57,9.37 6.63,8.43 7.19,7.49 6.71,6.33 5.64,6.07 5.64,4.73 6.71,4.47 7.19,3.31 6.63,2.37 7.57,1.43 8.51,1.99 9.67,1.51 9.93,0.44 11.27,0.44 11.53,1.51 12.69,1.99 13.63,1.43 14.57,2.37 14.01,3.31" fill="#d8d8d4" stroke="#636361" stroke-width=".85" stroke-linejoin="round"/><circle cx="10.6" cy="5.4" r="1.35" fill="#dddbd5" stroke="#636361" stroke-width=".85"/></svg></div>
<div class="tx" style="left:41.85px;top:274.0px;transform:scaleX(1.1528);">Mifare</div>
<div class="ic" style="left:17px;top:298px"><svg width="16" height="16" viewBox="0 0 16 16"><polygon points="9.58,9.52 10.65,9.81 10.65,11.19 9.58,11.48 9.08,12.69 9.63,13.65 8.65,14.63 7.69,14.08 6.48,14.58 6.19,15.65 4.81,15.65 4.52,14.58 3.31,14.08 2.35,14.63 1.37,13.65 1.92,12.69 1.42,11.48 0.35,11.19 0.35,9.81 1.42,9.52 1.92,8.31 1.37,7.35 2.35,6.37 3.31,6.92 4.52,6.42 4.81,5.35 6.19,5.35 6.48,6.42 7.69,6.92 8.65,6.37 9.63,7.35 9.08,8.31" fill="#e2e2de" stroke="#8c8c88" stroke-width=".85" stroke-linejoin="round"/><circle cx="5.5" cy="10.5" r="1.25" fill="#dddbd5" stroke="#8c8c88" stroke-width=".85"/><polygon points="14.49,4.47 15.56,4.73 15.56,6.07 14.49,6.33 14.01,7.49 14.57,8.43 13.63,9.37 12.69,8.81 11.53,9.29 11.27,10.36 9.93,10.36 9.67,9.29 8.51,8.81 7.57,9.37 6.63,8.43 7.19,7.49 6.71,6.33 5.64,6.07 5.64,4.73 6.71,4.47 7.19,3.31 6.63,2.37 7.57,1.43 8.51,1.99 9.67,1.51 9.93,0.44 11.27,0.44 11.53,1.51 12.69,1.99 13.63,1.43 14.57,2.37 14.01,3.31" fill="#d8d8d4" stroke="#636361" stroke-width=".85" stroke-linejoin="round"/><circle cx="10.6" cy="5.4" r="1.35" fill="#dddbd5" stroke="#636361" stroke-width=".85"/></svg></div>
<div class="tx" style="left:41.96px;top:299.0px;transform:scaleX(1.0377);">Moneo</div>
<div class="ic" style="left:17px;top:323px"><svg width="16" height="16" viewBox="0 0 16 16"><polygon points="9.58,9.52 10.65,9.81 10.65,11.19 9.58,11.48 9.08,12.69 9.63,13.65 8.65,14.63 7.69,14.08 6.48,14.58 6.19,15.65 4.81,15.65 4.52,14.58 3.31,14.08 2.35,14.63 1.37,13.65 1.92,12.69 1.42,11.48 0.35,11.19 0.35,9.81 1.42,9.52 1.92,8.31 1.37,7.35 2.35,6.37 3.31,6.92 4.52,6.42 4.81,5.35 6.19,5.35 6.48,6.42 7.69,6.92 8.65,6.37 9.63,7.35 9.08,8.31" fill="#e2e2de" stroke="#8c8c88" stroke-width=".85" stroke-linejoin="round"/><circle cx="5.5" cy="10.5" r="1.25" fill="#dddbd5" stroke="#8c8c88" stroke-width=".85"/><polygon points="14.49,4.47 15.56,4.73 15.56,6.07 14.49,6.33 14.01,7.49 14.57,8.43 13.63,9.37 12.69,8.81 11.53,9.29 11.27,10.36 9.93,10.36 9.67,9.29 8.51,8.81 7.57,9.37 6.63,8.43 7.19,7.49 6.71,6.33 5.64,6.07 5.64,4.73 6.71,4.47 7.19,3.31 6.63,2.37 7.57,1.43 8.51,1.99 9.67,1.51 9.93,0.44 11.27,0.44 11.53,1.51 12.69,1.99 13.63,1.43 14.57,2.37 14.01,3.31" fill="#d8d8d4" stroke="#636361" stroke-width=".85" stroke-linejoin="round"/><circle cx="10.6" cy="5.4" r="1.35" fill="#dddbd5" stroke="#636361" stroke-width=".85"/></svg></div>
<div class="tx" style="left:43.00px;top:324.0px;transform:scaleX(1.0651);">vitale 2</div>
<div class="a" style="left:15px;top:346px;width:196px;height:1px;background:#26241f"></div>
<div class="ic" style="left:17px;top:353px"><svg width="16" height="16" viewBox="0 0 16 16"><path d="M1.5 13.5V2.5h5v2h6.8v9z" fill="#d6dabc" stroke="#9a9c92"/><path d="M1.6 13.5l1.6-5h12.2l-1.6 5z" fill="#e6e9d2" stroke="#9a9c92"/><path d="M4 11.5h9" stroke="#d3d8b2" stroke-width="1.6"/></svg></div>
<div class="tx" style="left:41.93px;top:354.0px;transform:scaleX(1.0656);">Load a script</div>
<div class="tx" style="left:168.43px;top:354.0px;transform:scaleX(1.0993);">Ctrl+L</div>
<div class="a" style="left:0px;top:273px;width:332px;height:33px;background:#f5e7b0;border:1px solid #000"></div>
<div class="a" style="left:6px;top:279px;width:320px;height:21px;border:1px solid #000"></div>
<div class="tx" style="left:10.10px;top:281.5px;transform:scaleX(1.0352);color:#000">Analyzes GSM SIM cards only (not 3G/USIM data)</div>
<div class="a" style="left:0px;top:1121px;width:1600px;height:1px;background:#f4f3f0"></div>
<div class="a" style="left:0px;top:1119px;width:1600px;height:2px;background:#eceae6"></div>
<div class="a" style="left:0px;top:1123px;width:1600px;height:1px;background:#8b8881"></div>
<div class="a" style="left:103px;top:1124px;width:1497px;height:2px;background:#7b786f"></div>
<div class="a" style="left:103px;top:1124px;width:2px;height:21px;background:#7b786f"></div>
<div class="a" style="left:105px;top:1126px;width:1495px;height:19px;background:#fdfefc"></div>
<div class="a" style="left:103px;top:1145px;width:1497px;height:1px;background:#f1f0f4"></div>
<div class="a" style="left:0px;top:1146px;width:1600px;height:1px;background:#eceae6"></div>
<div class="ic" style="left:2px;top:1127px"><svg width="16" height="16" viewBox="0 0 16 16"><polygon points="9.58,9.52 10.65,9.81 10.65,11.19 9.58,11.48 9.08,12.69 9.63,13.65 8.65,14.63 7.69,14.08 6.48,14.58 6.19,15.65 4.81,15.65 4.52,14.58 3.31,14.08 2.35,14.63 1.37,13.65 1.92,12.69 1.42,11.48 0.35,11.19 0.35,9.81 1.42,9.52 1.92,8.31 1.37,7.35 2.35,6.37 3.31,6.92 4.52,6.42 4.81,5.35 6.19,5.35 6.48,6.42 7.69,6.92 8.65,6.37 9.63,7.35 9.08,8.31" fill="#e2e2de" stroke="#8c8c88" stroke-width=".85" stroke-linejoin="round"/><circle cx="5.5" cy="10.5" r="1.25" fill="#dddbd5" stroke="#8c8c88" stroke-width=".85"/><polygon points="14.49,4.47 15.56,4.73 15.56,6.07 14.49,6.33 14.01,7.49 14.57,8.43 13.63,9.37 12.69,8.81 11.53,9.29 11.27,10.36 9.93,10.36 9.67,9.29 8.51,8.81 7.57,9.37 6.63,8.43 7.19,7.49 6.71,6.33 5.64,6.07 5.64,4.73 6.71,4.47 7.19,3.31 6.63,2.37 7.57,1.43 8.51,1.99 9.67,1.51 9.93,0.44 11.27,0.44 11.53,1.51 12.69,1.99 13.63,1.43 14.57,2.37 14.01,3.31" fill="#d8d8d4" stroke="#636361" stroke-width=".85" stroke-linejoin="round"/><circle cx="10.6" cy="5.4" r="1.35" fill="#dddbd5" stroke="#636361" stroke-width=".85"/></svg></div>
<div class="tx" style="left:26.19px;top:1128.0px;transform:scaleX(1.0859);">Command:</div>
<div class="a" style="left:0px;top:1147px;width:1600px;height:1px;background:#8b8881"></div>
<div class="a" style="left:0px;top:1147px;width:1px;height:24px;background:#8b8881"></div>
<div class="a" style="left:0px;top:1171px;width:1600px;height:1px;background:#f7f6f3"></div>
<div class="tx" style="left:5.52px;top:1152.0px;transform:scaleX(0.9534);">0172 ERROR</div>
<div class="tx" style="left:95.28px;top:1152.0px;transform:scaleX(1.0905);">backtrace: called at [string &quot;gsm (beta).lua&quot;]</div>
<div class="a" style="left:0px;top:1172px;width:1600px;height:28px;background:#dddbd5"></div>
<div class="a" style="left:0px;top:1173px;width:1600px;height:1px;background:#fff"></div>
<div class="btn" style="left:2px;top:1176px;width:52px;height:22px;"></div>
<div class="ic" style="left:4px;top:1179px"><svg width="16" height="16" viewBox="0 0 13.5 14.5"><path d="M2.6 2.6q2.2-1.3 4.4 0L5.9 7q-2.2-1.2-4.3 0z" fill="#e8541c"/><path d="M8 3q2.200 1.300 4.600 0L11.400 7.500q-2.300 1.200-4.500 0z" fill="#7cbc2c"/><path d="M1.400 8q2.200-1.300 4.300 0L4.600 12.500q-2.200-1.200-4.300 0z" fill="#3a8ee0"/><path d="M6.700 8.500q2.200 1.200 4.500 0L10 13q-2.200 1.200-4.400 0z" fill="#f8c41c"/></svg></div>
<div class="tx tbb" style="left:21.74px;top:1179.5px;transform:scaleX(1.0556);font-size:12px">Start</div>
<div class="ic" style="left:62.5px;top:1179px"><svg width="16" height="16" viewBox="0 0 16 16"><rect x="1" y="0.500" width="7.500" height="13.500" fill="#c4d0e4" stroke="#6878a0" stroke-width=".8"/><path d="M2.200 2.500h5M2.200 4.800h5M2.200 7.100h5" stroke="#3c4c78" stroke-width="1"/><rect x="6.500" y="9.500" width="9" height="6" fill="#9aa0b0" stroke="#4c5468" stroke-width=".8"/><path d="M8.800 9.500q0-2.200 2.200-2.200t2.200 2.200" fill="none" stroke="#4c5468" stroke-width="1"/><path d="M6.500 12h9" stroke="#4c5468" stroke-width=".8"/></svg></div>
<div class="ic" style="left:84.8px;top:1179px"><svg width="16" height="16" viewBox="0 0 16 16"><rect x=".5" y="2.500" width="15" height="11.500" fill="#2c62cc" stroke="#88a8e0" stroke-width=".9"/><path d="M1 3h14v6q-7 2-14-1z" fill="#4a82e0"/><rect x="1" y="11.800" width="14" height="1.800" fill="#1c2438"/><rect x="1.300" y="11.400" width="2.800" height="2.400" fill="#58a838"/><circle cx="2.500" cy="10.800" r=".9" fill="#e84c2c"/></svg></div>
<div class="ic" style="left:107.6px;top:1179px"><svg width="16" height="16" viewBox="0 0 16 16"><circle cx="8" cy="8.2" r="7.2" fill="#f0801c"/><path d="M8 1a7.200 7.200 0 0 1 7.200 7.200q-2-3-4.200-2.700Q9 3 8 1z" fill="#fcc41c"/><circle cx="8.300" cy="7.500" r="4.100" fill="#2a5cb8"/><path d="M4 4.500q2.500-.5 3.500 2.500l2.500 1.500q-1 3-4 2.500Q2.500 9 4 4.500z" fill="#f0701c"/><path d="M1 6.500Q.5 12 5 14.700q4 2 7.500-.7Q8 15 5.500 12.500T1 6.500z" fill="#d8481c"/></svg></div>
<div class="ic" style="left:130.5px;top:1179px"><svg width="16" height="16" viewBox="0 0 16 16"><circle cx="8" cy="8.200" r="7.200" fill="#2a62b4"/><path d="M3.500 3.500Q8 0 12.500 3.500 15 6 14.500 10 13 6 10 5.500 6 3.500 3.500 3.500z" fill="#5a9ae0"/><path d="M3.200 8.500l3.600-2.600q3-.6 4.400 1.800.6 3-1.800 4.400L4.800 13.400q-2-1.800-1.600-4.900z" fill="#eceff4"/><path d="M3.400 8.800l3.600 1.800 4-2.600" fill="none" stroke="#9aa6b8" stroke-width=".8"/><path d="M9.500 3.800l1.800.3-.8 1.200z" fill="#10244c"/></svg></div>
<div class="btn" style="left:168px;top:1176px;width:134px;height:22px;"></div>
<div class="ic" style="left:173px;top:1179px"><svg width="16" height="16" viewBox="0 0 16 16"><path d="M1.500 2.500h6l4 1v11l-4 1h-6z" fill="#f4dc6c" stroke="#c4a02c" stroke-width=".8"/><path d="M3 3.500h4.500v11H3z" fill="#fcf0a0"/><path d="M9.800.3l5.200 5.200h-2.800v5.500H7.600V5.500H4.800z" fill="#38b438" stroke="#1c7c1c" stroke-width=".7" transform="translate(2.500 0) scale(.82)"/><rect x="10" y="10.500" width="4" height="3.500" fill="#6c9cdc"/></svg></div>
<div class="btn" style="left:305px;top:1176px;width:134px;height:22px;"></div>
<div class="ic" style="left:310px;top:1179px"><svg width="16" height="16" viewBox="0 0 16 16"><circle cx="8" cy="8.2" r="7.2" fill="#f0801c"/><path d="M8 1a7.200 7.200 0 0 1 7.200 7.200q-2-3-4.200-2.700Q9 3 8 1z" fill="#fcc41c"/><circle cx="8.300" cy="7.500" r="4.100" fill="#2a5cb8"/><path d="M4 4.500q2.500-.5 3.500 2.500l2.500 1.500q-1 3-4 2.500Q2.500 9 4 4.500z" fill="#f0701c"/><path d="M1 6.500Q.5 12 5 14.700q4 2 7.500-.7Q8 15 5.500 12.500T1 6.500z" fill="#d8481c"/></svg></div>
<div class="btn" style="left:442px;top:1176px;width:134px;height:22px;"></div>
<div class="ic" style="left:447px;top:1179px"><svg width="16" height="16" viewBox="0 0 16 16"><rect x=".8" y=".8" width="8" height="8" fill="none" stroke="#58a838" stroke-width=".9" stroke-dasharray="1 1"/><path d="M2.500 1.500h4.500v6H2.500z" fill="#f0d048" stroke="#b89018" stroke-width=".7"/><path d="M4 14.500L12.500 5.500M5 5.500l8.500 9" stroke="#5c6068" stroke-width="1.700"/><path d="M12 4.500l2.500 2" stroke="#c8a838" stroke-width="2"/><circle cx="4.800" cy="5" r="1.600" fill="#9098a8"/></svg></div>
<div class="btn" style="left:579px;top:1176px;width:134px;height:22px;"></div>
<div class="ic" style="left:584px;top:1179px"><svg width="16" height="16" viewBox="0 0 16 16"><path d="M8 8q-2-3-4-3a3 3 0 0 0 0 6q2 0 4-3t4-3a3 3 0 0 1 0 6q-2 0-4-3z" fill="none" stroke="#3a3aa4" stroke-width="2.100"/></svg></div>
<div class="btn" style="left:716px;top:1176px;width:134px;height:22px;"></div>
<div class="ic" style="left:721px;top:1179px"><svg width="16" height="16" viewBox="0 0 16 16"><circle cx="8" cy="8.200" r="7.200" fill="#2a62b4"/><path d="M3.500 3.500Q8 0 12.500 3.500 15 6 14.500 10 13 6 10 5.500 6 3.500 3.500 3.500z" fill="#5a9ae0"/><path d="M3.200 8.500l3.600-2.600q3-.6 4.400 1.800.6 3-1.800 4.400L4.800 13.400q-2-1.800-1.600-4.900z" fill="#eceff4"/><path d="M3.400 8.800l3.600 1.800 4-2.600" fill="none" stroke="#9aa6b8" stroke-width=".8"/><path d="M9.500 3.800l1.800.3-.8 1.200z" fill="#10244c"/></svg></div>
<div class="btn" style="left:853px;top:1176px;width:134px;height:22px;"></div>
<div class="ic" style="left:858px;top:1179px"><svg width="16" height="16" viewBox="0 0 16 16"><path d="M2.500 1.500h6l4 1v12l-4 1h-6z" fill="#f4dc6c" stroke="#c4a02c" stroke-width=".8"/><path d="M4 2.500h4.500v12H4z" fill="#fcf0a0"/></svg></div>
<div class="a" style="left:990px;top:1176px;width:135px;height:22px;border:1px solid;border-color:#45433f #fff #fff #45433f;background:#efeeeb"></div>
<div class="ic" style="left:995px;top:1179.500px"><svg width="16" height="16" viewBox="0 0 16 16"><defs><linearGradient id="ab" x1="0" y1="0" x2="0" y2="1"><stop offset="0" stop-color="#5f8fdc"/><stop offset=".4" stop-color="#1745a8"/><stop offset="1" stop-color="#123c9c"/></linearGradient></defs><circle cx="8" cy="8" r="7" fill="url(#ab)"/><circle cx="8" cy="8.200" r="4.600" fill="#7d98cf"/><path d="M5.400 4.800v6.800M8 4.200v8M10.600 4.800v6.800" stroke="#f4f4f6" stroke-width="1.700"/></svg></div>
<div class="btn" style="left:1128px;top:1176px;width:135px;height:22px;"></div>
<div class="ic" style="left:1133px;top:1179px"><svg width="16" height="16" viewBox="0 0 16 16"><g stroke="#f09018" stroke-width="1.300"><path d="M8 .5v4M1.500 3l3 3M14.500 3l-3 3M.5 9h3.500M15.500 9h-3.500"/></g><circle cx="8" cy="10" r="4.600" fill="#f8a428" stroke="#d87010" stroke-width=".8"/><circle cx="6.300" cy="9.500" r="1.200" fill="#fff"/><circle cx="9.700" cy="9.500" r="1.200" fill="#fff"/><circle cx="6.400" cy="9.600" r=".55" fill="#000"/><circle cx="9.800" cy="9.600" r=".55" fill="#000"/></svg></div>
<div class="btn" style="left:1266px;top:1176px;width:135px;height:22px;"></div>
<div class="ic" style="left:1271px;top:1179px"><svg width="16" height="16" viewBox="0 0 16 16"><circle cx="8" cy="8.2" r="7.2" fill="#f0801c"/><path d="M8 1a7.200 7.200 0 0 1 7.200 7.200q-2-3-4.200-2.700Q9 3 8 1z" fill="#fcc41c"/><circle cx="8.300" cy="7.500" r="4.100" fill="#2a5cb8"/><path d="M4 4.500q2.500-.5 3.500 2.500l2.500 1.500q-1 3-4 2.500Q2.500 9 4 4.500z" fill="#f0701c"/><path d="M1 6.500Q.5 12 5 14.700q4 2 7.500-.7Q8 15 5.500 12.500T1 6.500z" fill="#d8481c"/></svg></div>
<div class="tx tb" style="left:190.79px;top:1180.0px;transform:scaleX(0.9505);">Mail0</div>
<div class="tx tb" style="left:328.85px;top:1180.0px;transform:scaleX(1.0145);">smart card reader s...</div>
<div class="tx tb" style="left:465.35px;top:1180.0px;transform:scaleX(1.0064);">Microsoft SQL Serv...</div>
<div class="tx tb" style="left:603.01px;top:1180.0px;transform:scaleX(0.9773);">OMSK1 - Microsoft ...</div>
<div class="tx tb" style="left:740.50px;top:1180.0px;transform:scaleX(1.0619);">\\192.168.0.8\Volu...</div>
<div class="tx tb" style="left:876.40px;top:1180.0px;transform:scaleX(1.0047);">Start Menu</div>
<div class="tx tbb" style="left:1015.04px;top:1181.0px;transform:scaleX(1.0390);">cardpeek: GSM S...</div>
<div class="tx tb" style="left:1151.85px;top:1180.0px;transform:scaleX(0.9837);">XnView - [Email-18....</div>
<div class="tx tb" style="left:1289.98px;top:1180.0px;transform:scaleX(1.0341);">cardpeek-0.8.1-win...</div>
<div class="tx tb" style="left:1410.95px;top:1180.0px;transform:scaleX(1.0526);font-size:11.5px">EN</div>
<div class="a" style="left:1432px;top:1177px;width:1px;height:20px;background:#8b8881"></div>
<div class="a" style="left:1433px;top:1177px;width:1px;height:20px;background:#fff"></div>
<div class="a" style="left:1437px;top:1176px;width:160px;height:22px;border:1px solid;border-color:#8b8881 #fff #fff #8b8881"></div>
<div class="ic" style="left:1439.5px;top:1179px"><svg preserveAspectRatio="none" width="16" height="16" viewBox="0 0 18 18"><rect x=".6" y=".6" width="16.800" height="16.800" rx="2" fill="#fafcff" stroke="#4060a8" stroke-width="1.100"/><path d="M4 3.500q5-1 8 3.500l2 6-3-3-2 4.500z" fill="#fff" stroke="#5c6c8c" stroke-width=".9"/><path d="M12 12.500l4.500 2.500-4.500 2.500z" fill="#38b438"/></svg></div>
<div class="ic" style="left:1458px;top:1179px"><svg preserveAspectRatio="none" width="14" height="16" viewBox="0 0 16 16"><path d="M3 2.500q3-2 7-.5 4 1 4.500 5t-2 6.500q-3 2-6 .5T1 9.500q-.5-4 2-7z" fill="#74b830"/><path d="M4.500 8l2.500 2.500 4.500-5" fill="none" stroke="#fff" stroke-width="2"/></svg></div>
<div class="ic" style="left:1475px;top:1179px"><svg preserveAspectRatio="none" width="16" height="16" viewBox="0 0 18 16"><path d="M1 5.500h3.500L10 .8v14.400L4.500 10.500H1z" fill="#e05030" stroke="#a03018" stroke-width=".8"/><path d="M12.500 4q2 4 0 8M15 2.500q3 5.500 0 11" fill="none" stroke="#c05838" stroke-width="1.100"/></svg></div>
<div class="ic" style="left:1492.5px;top:1179px"><svg preserveAspectRatio="none" width="17" height="16" viewBox="0 0 20 18"><rect x="1" y="5.500" width="18" height="12" fill="#e8f0e0" stroke="#188038" stroke-width="1.600" stroke-dasharray="2 1"/><path d="M4 14.500h11" stroke="#3848a8" stroke-width="1.600"/><path d="M7 8l7 5" stroke="#2848c8" stroke-width="2.400"/><circle cx="6" cy="4.500" r="4" fill="#18e8e8"/></svg></div>
<div class="ic" style="left:1521px;top:1179px"><svg preserveAspectRatio="none" width="16" height="16" viewBox="0 0 18 18"><rect x="6" y="1" width="10" height="8.500" fill="#1c5ca8" stroke="#e4e8f0" stroke-width="1.200"/><rect x="1.500" y="5" width="10" height="8.500" fill="#1c5ca8" stroke="#e4e8f0" stroke-width="1.200"/><path d="M3 16h7" stroke="#c8ccd4" stroke-width="1.600"/><circle cx="12.500" cy="13" r="4.200" fill="#2858d8"/><path d="M9.500 11q3 1 5-1.500M10 15.500q3-2 6-.5" stroke="#38d838" stroke-width="1.600" fill="none"/></svg></div>
<div class="ic" style="left:1539px;top:1179px"><svg preserveAspectRatio="none" width="14.5" height="16" viewBox="0 0 18 18"><path d="M1 6h3L9.500 1v16L4 12H1z" fill="#f4f6fa" stroke="#80889c" stroke-width="1"/><path d="M12.500 5.500q2.500 3.500 0 7" fill="none" stroke="#48c868" stroke-width="1.400"/></svg></div>
<div class="tx tb" style="left:1564.49px;top:1180.0px;transform:scaleX(1.0233);font-size:11.5px">8:49</div>
</body></html>
